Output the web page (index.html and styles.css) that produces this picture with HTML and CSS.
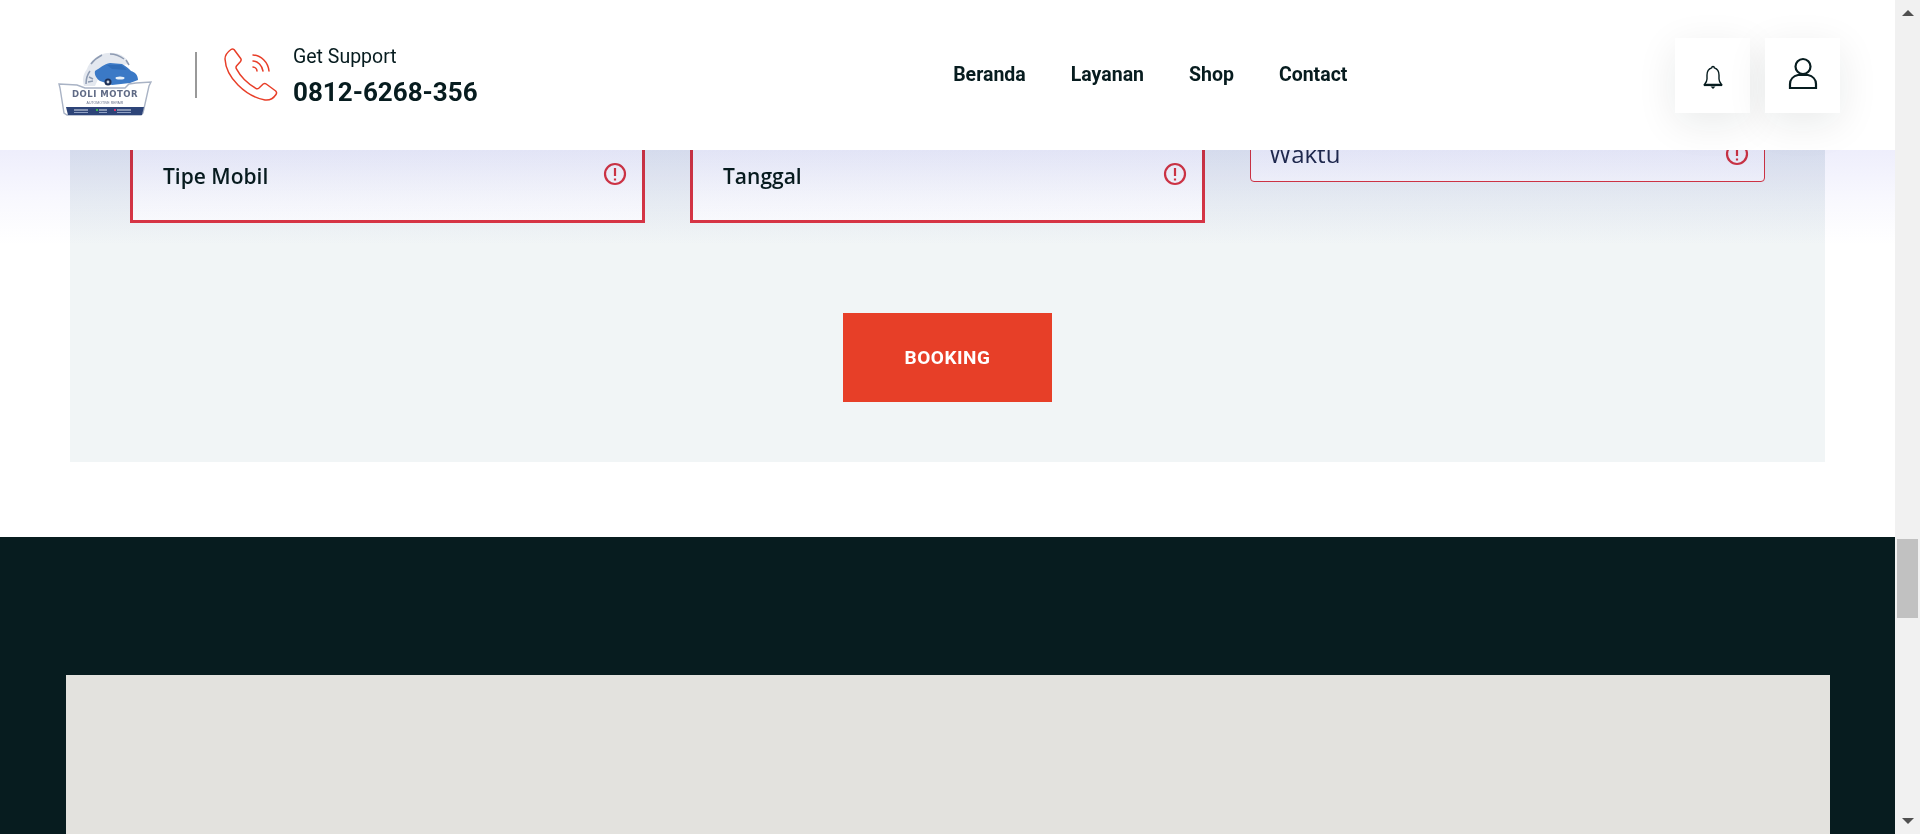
FILE: index.html
```html
<!DOCTYPE html>
<html lang="id">
<head>
    <meta charset="UTF-8">
    <meta name="viewport" content="width=device-width, initial-scale=1.0">
    <title>Doli Motor - Booking</title>
    <link rel="stylesheet" href="styles.css">
</head>
<body>
    <div class="page">
        <header class="site-header">
            <div class="brand">
                <svg class="logo" viewBox="0 0 94 64" aria-label="Doli Motor">
                    <path d="M26 34c-2-6-1-12 3-17 2-6 7-11 13-14 7-3 15-3 21 0 4 2 7 5 8 9l-26 4-8 18z" fill="#e4e8ef"/>
                    <path d="M28 32c0-5 1-9 4-13M33 12c3-4 7-7 11-9M52 2c5 0 10 2 14 5M68 8l3 5M31 25l4 2M30 30l5-1" fill="none" stroke="#8e9bb2" stroke-width="1.500"/>
                    <path d="M37 19c5-3 9-7 15-8l12 1c4 2 7 5 9 7 4 1 7 4 7 9l-8 3-18 2-12-4c-3-2-6-6-5-10z" fill="#3b79c6"/>
                    <path d="M49 13l14 0c2 1 4 3 6 5l-15-1z" fill="#2f6cb8"/>
                    <ellipse cx="62" cy="26" rx="4.500" ry="1.500" fill="#e8f0f8"/>
                    <circle cx="50" cy="30" r="3.500" fill="#1e2f55"/>
                    <circle cx="50" cy="30" r="1.400" fill="#cfd7e4"/>
                    <path d="M1 32l18 1 8 3h40l4-4 7-1 15-1-2 4-6 27-2 2H9l-3-2L2 36z" fill="#fff" stroke="#a9b3c5" stroke-width="1.400"/>
                    <text class="logo-name" x="47" y="45" text-anchor="middle">DOLI MOTOR</text>
                    <text class="logo-sub" x="47" y="51.500" text-anchor="middle">AUTOMOTIVE REPAIR</text>
                    <path d="M8 55h78l-2 8H10z" fill="#2d4478"/>
                    <path d="M16 58h14M41 58h8M59 58h14" stroke="#dfe4ec" stroke-width="1"/>
                    <path d="M16 60.500h14M41 60.500h8M59 60.500h14" stroke="#8fa0c4" stroke-width="1"/>
                    <rect x="38" y="57" width="2" height="2" fill="#3fb950"/>
                    <rect x="56" y="57" width="2" height="2" fill="#d6336c"/>
                </svg>
                <span class="divider"></span>
                <svg class="phone-icon" viewBox="0 0 54 54">
                    <path d="M10 1.500c-1-.8-2-.7-3 0C3.500 4 1 7 1 11c.5 10 6 19 13 26 7 7 16 13 27 15 4 .5 8-1 11-5.500 1-1.500.7-2.500-.3-3.500l-9.500-7c-1-.7-2-.7-3 0l-4.200 4c-1 .8-2 1-3.200.3-4-2.300-8-5.300-11.500-8.800-3.300-3.300-6-7-8-10.800-.5-1-.4-2 .4-3l3.800-4.200c.8-1 .9-2 .2-3z" fill="none" stroke="#e83e28" stroke-width="1.500" stroke-linejoin="round"/>
                    <path d="M29 7c8 .5 15 7 16 16M29 13c5 .3 9 4.500 10 10M29 19c2 .2 4 2 4 4" fill="none" stroke="#e83e28" stroke-width="1.500" stroke-linecap="round"/>
                </svg>
                <div class="support">
                    <span class="support-label">Get Support</span>
                    <strong class="support-number">0812-6268-356</strong>
                </div>
            </div>
            <nav class="main-nav">
                <a href="#">Beranda</a>
                <a href="#">Layanan</a>
                <a href="#">Shop</a>
                <a href="#">Contact</a>
            </nav>
            <div class="header-actions">
                <button class="icon-button">
                    <svg class="bell-icon" viewBox="0 0 20 24">
                        <path d="M10 1.500c-.8 0-1.300.5-1.300 1.300C5.500 3.800 4 6.500 4 10v4c0 2.500-1.200 4-2.500 5.500h17C17.200 18 16 16.500 16 14v-4c0-3.500-1.500-6.200-4.700-7.200 0-.8-.5-1.300-1.300-1.300z" fill="none" stroke="#071c1f" stroke-width="1.400"/>
                        <path d="M1 20.500h18" stroke="#071c1f" stroke-width="1.200"/>
                        <path d="M7.500 21.500h5L10 24z" fill="#071c1f"/>
                    </svg>
                </button>
                <button class="icon-button">
                    <svg class="user-icon" viewBox="0 0 30 33">
                        <circle cx="15" cy="9.500" r="7.500" fill="none" stroke="#071c1f" stroke-width="2.200"/>
                        <path d="M2 31v-4c0-4.500 3.500-8 8-9h10c4.500 1 8 4.500 8 9v4z" fill="none" stroke="#071c1f" stroke-width="2.200"/>
                    </svg>
                </button>
            </div>
        </header>
        <div class="header-fade"></div>

        <main>
            <section class="booking-panel">
                <div class="field-row">
                    <div class="field field-touched">
                        <span>Tipe Mobil</span>
                        <svg class="alert-icon" viewBox="0 0 24 24"><circle cx="12" cy="12" r="10"/><path d="M12 6v8M12 16.500v2"/></svg>
                    </div>
                    <div class="field field-touched">
                        <span>Tanggal</span>
                        <svg class="alert-icon" viewBox="0 0 24 24"><circle cx="12" cy="12" r="10"/><path d="M12 6v8M12 16.500v2"/></svg>
                    </div>
                    <div class="field field-plain">
                        <span>Waktu</span>
                        <svg class="alert-icon" viewBox="0 0 24 24"><circle cx="12" cy="12" r="10"/><path d="M12 6v8M12 16.500v2"/></svg>
                    </div>
                </div>
                <button class="booking-button">BOOKING</button>
            </section>
            <section class="dark-section">
                <div class="map-box"></div>
            </section>
        </main>
    </div>
    <aside class="scrollbar">
        <span class="arrow-up"></span>
        <span class="scroll-thumb"></span>
        <span class="arrow-down"></span>
    </aside>
</body>
</html>
```
FILE: styles.css
```css
* {
    box-sizing: border-box;
}
body {
    margin: 0;
    height: 834px;
    overflow: hidden;
    display: flex;
    background: white;
    font-family: "Open Sans", sans-serif;
}
.page {
    position: relative;
    flex: 1;
    height: 834px;
    overflow: hidden;
}

/* header sits over the scrolled page */
.site-header {
    position: absolute;
    top: 0;
    left: 0;
    right: 0;
    z-index: 2;
    height: 150px;
    background: white;
    display: grid;
    grid-template-columns: auto 1fr auto;
    align-items: center;
    padding: 0 55px 0 58px;
}
.header-fade {
    position: absolute;
    top: 150px;
    left: 0;
    right: 0;
    z-index: 1;
    height: 95px;
    background: linear-gradient(to bottom, #eeeefc, #f8f8fe 50%, white);
    mix-blend-mode: multiply;
    pointer-events: none;
}
.brand {
    display: flex;
    align-items: center;
}
.logo {
    width: 94px;
    height: 64px;
    margin-top: 18px;
    filter: blur(0.5px);
}
.logo-name {
    font-family: "DejaVu Sans", sans-serif;
    font-size: 8.500px;
    font-weight: bold;
    letter-spacing: 0.5px;
    fill: #5f6a85;
}
.logo-sub {
    font-family: "Liberation Sans", sans-serif;
    font-size: 3.500px;
    fill: #66708a;
}
.divider {
    width: 2px;
    height: 46px;
    background: #999;
    margin: 0 27px 0 43px;
}
.phone-icon {
    width: 54px;
    height: 54px;
    margin-right: 15px;
}
.support {
    display: flex;
    flex-direction: column;
    padding-top: 4px;
    font-family: Roboto, sans-serif;
    color: #071c1f;
}
.support-label {
    font-size: 19.500px;
    line-height: 24px;
}
.support-number {
    font-size: 26px;
    line-height: 36px;
    font-weight: 700;
    margin-top: 5px;
}
.main-nav {
    display: flex;
    justify-content: center;
    gap: 45px;
    margin: -2px 0 0 148px;
}
.main-nav a {
    font-family: Roboto, sans-serif;
    font-size: 19.500px;
    font-weight: 700;
    color: #071c1f;
    text-decoration: none;
}
.header-actions {
    display: flex;
    justify-content: flex-end;
    gap: 15px;
}
.icon-button {
    width: 75px;
    height: 75px;
    padding: 0;
    border: none;
    background: white;
    box-shadow: 0 10px 40px rgba(7, 28, 31, 0.09);
    display: flex;
    align-items: center;
    justify-content: center;
}
.bell-icon {
    width: 20px;
    height: 24px;
    margin-top: 4px;
}
.user-icon {
    width: 30px;
    height: 33px;
    margin-top: -3px;
}

.booking-panel {
    position: relative;
    margin: 0 70px;
    height: 462px;
    background: #f1f5f6;
    padding: 120px 60px 0;
}
.booking-panel::after {
    content: "";
    position: absolute;
    top: 150px;
    left: 0;
    right: 0;
    height: 95px;
    background: linear-gradient(to bottom, #f3f5f9, #fafbfc 55%, white);
    mix-blend-mode: multiply;
    pointer-events: none;
}
.field-row {
    display: grid;
    grid-template-columns: repeat(3, 1fr);
    gap: 45px;
    align-items: start;
}
.field {
    display: flex;
    justify-content: space-between;
    align-items: flex-start;
    background: white;
}
.field-touched {
    height: 103px;
    border: 3px solid #dc3545;
    padding: 0 15px 0 30px;
    font-size: 21px;
    font-weight: 600;
    color: #071c1f;
}
.field-touched span {
    padding-top: 39px;
}
.field-touched .alert-icon {
    margin-top: 39px;
}
.field-plain {
    height: 62px;
    border: 1px solid #dc3545;
    border-radius: 4px;
    padding: 0 15px 0 18px;
    font-size: 24px;
    color: #212b50;
}
.field-plain span {
    padding-top: 16px;
}
.field-plain .alert-icon {
    margin-top: 21px;
}
.alert-icon {
    width: 24px;
    height: 24px;
    fill: none;
    stroke: #dc3545;
    stroke-width: 2.200;
}
.booking-button {
    display: block;
    width: 209px;
    height: 89px;
    margin: 90px auto 0;
    border: none;
    background: #e73f28;
    color: white;
    font-family: Roboto, sans-serif;
    font-size: 19px;
    font-weight: 700;
    letter-spacing: 0.5px;
}

.dark-section {
    margin-top: 75px;
    height: 297px;
    background: #071c1f;
    padding: 138px 65px 0 66px;
}
.map-box {
    height: 159px;
    background: #e3e2de;
}

/* the browser's scrollbar in the picture */
.scrollbar {
    width: 25px;
    height: 834px;
    background: #f1f1f1;
    display: flex;
    flex-direction: column;
    align-items: center;
    padding: 10px 0;
}
.arrow-up {
    border: 6px solid transparent;
    border-top: none;
    border-bottom: 6px solid #505050;
}
.arrow-down {
    border: 6px solid transparent;
    border-bottom: none;
    border-top: 6px solid #505050;
    margin-top: auto;
}
.scroll-thumb {
    width: 21px;
    height: 79px;
    margin-top: 523px;
    background: #c1c1c1;
}
```
